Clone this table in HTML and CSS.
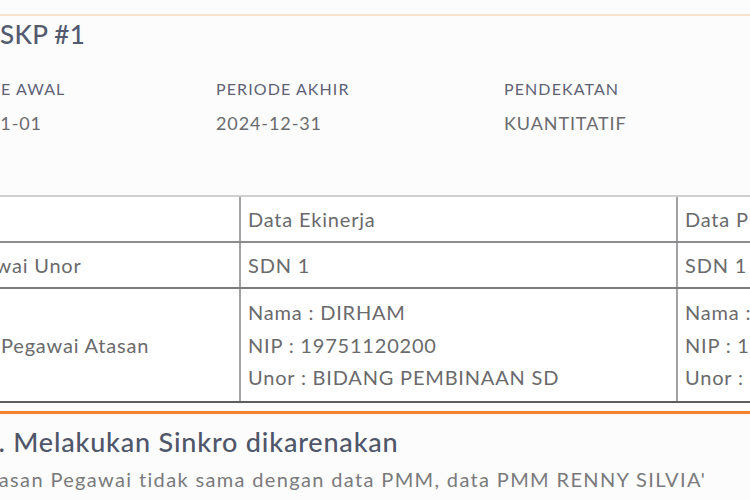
FILE: index.html
```html
<!DOCTYPE html>
<html lang="id">
<head>
<meta charset="utf-8">
<link rel="stylesheet" href="styles.css">
</head>
<body>
<div class="topline"></div>
<div class="page">
  <h2 class="title">SKP #1</h2>
  <div class="meta">
    <div class="meta-item">
      <div class="label">PERIODE AWAL</div>
      <div class="value">2024-01-01</div>
    </div>
    <div class="meta-item">
      <div class="label">PERIODE AKHIR</div>
      <div class="value">2024-12-31</div>
    </div>
    <div class="meta-item">
      <div class="label">PENDEKATAN</div>
      <div class="value">KUANTITATIF</div>
    </div>
  </div>
  <table class="cmp">
    <colgroup>
      <col class="col1">
      <col class="col2">
      <col class="col3">
    </colgroup>
    <tr class="head">
      <td class="c1"></td>
      <td class="c2">Data Ekinerja</td>
      <td class="c3">Data PMM</td>
    </tr>
    <tr class="r2">
      <td class="c1">Pegawai Unor</td>
      <td class="c2">SDN 1</td>
      <td class="c3">SDN 1</td>
    </tr>
    <tr class="r3">
      <td class="c1">Data Pegawai Atasan</td>
      <td class="c2">Nama : DIRHAM<br>NIP : 19751120200<br>Unor : BIDANG PEMBINAAN SD</td>
      <td class="c3">Nama : RENNY SILVIA<br>NIP : 19800101200<br>Unor : SDN 1</td>
    </tr>
  </table>
  <div class="orange"></div>
  <h3 class="reason-title">1. Melakukan Sinkro dikarenakan</h3>
  <p class="reason-text">Atasan Pegawai tidak sama dengan data PMM, data PMM RENNY SILVIA'</p>
</div>
</body>
</html>
```
FILE: styles.css
```css
html, body {
  margin: 0;
  padding: 0;
}
body {
  background: #fcfcfd;
  font-family: "Lato", "Open Sans", sans-serif;
  overflow: hidden;
  width: 750px;
  height: 500px;
}
.topline {
  height: 2px;
  margin-top: 14px;
  background: #f9e3d0;
}
.page {
  display: flex;
  flex-direction: column;
  align-items: flex-start;
}
.title {
  margin: 2px 0 0 0;
  font-size: 26px;
  line-height: 32px;
  font-weight: 500;
  color: #535a6d;
  letter-spacing: 0.3px;
}
.meta {
  display: grid;
  grid-template-columns: 280px 288px 200px;
  margin: 29px 0 0 -64px;
}
.label {
  font-size: 16px;
  line-height: 20px;
  color: #5e6176;
  letter-spacing: 1.1px;
  white-space: nowrap;
}
.value {
  margin-top: 12px;
  font-size: 18px;
  line-height: 24px;
  color: #6b6b6e;
  letter-spacing: 0.9px;
  white-space: nowrap;
}
.cmp {
  margin: 60px 0 0 -57px;
  border-collapse: collapse;
  table-layout: fixed;
  background: #ffffff;
  font-size: 20px;
  letter-spacing: 0.8px;
  color: #6a6a6c;
  width: 1010px;
}
.col1 { width: 297px; }
.col2 { width: 437px; }
.col3 { width: 276px; }
.cmp td {
  padding: 6px 7px;
  line-height: 32px;
  vertical-align: middle;
  border-left: 2px solid #a2a2a4;
  white-space: nowrap;
  overflow: hidden;
}
.cmp td.c1 { border-left: none; }
.head td { border-top: 2px solid #cfcfd1; border-bottom: 2px solid #8c8c8e; }
.r2 td { border-bottom: 2px solid #7c7c7e; }
.r3 td { border-bottom: 2px solid #5e5e60; line-height: 32.5px; padding: 7px 7px; }
.orange {
  align-self: stretch;
  margin-top: 8px;
  height: 3px;
  background: #f4822f;
  box-shadow: 0 0 1px #f8b98a;
}
.reason-title {
  margin: 12px 0 0 -18px;
  font-size: 27px;
  line-height: 32px;
  font-weight: 500;
  color: #4f566a;
  letter-spacing: 0.8px;
  white-space: nowrap;
}
.reason-text {
  margin: 8px 0 0 -24px;
  font-size: 20px;
  line-height: 26px;
  color: #7a7a7c;
  letter-spacing: 1.35px;
  white-space: nowrap;
}
```
